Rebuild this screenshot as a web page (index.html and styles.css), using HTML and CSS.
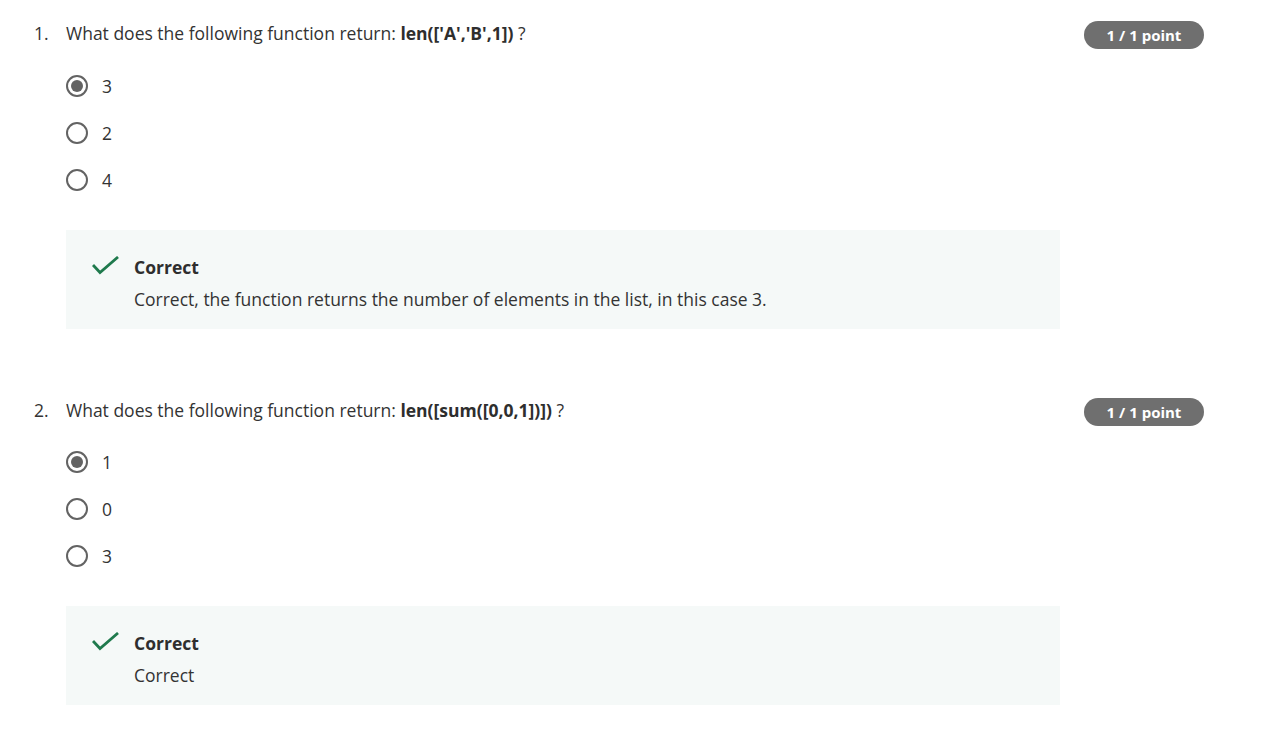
FILE: index.html
```html
<!DOCTYPE html>
<html>
<head>
<meta charset="utf-8">
<link rel="stylesheet" href="styles.css">
</head>
<body>
<main class="quiz">
  <section class="question q1">
    <div class="q-head">
      <span class="q-num">1.</span>
      <span class="q-text">What does the following function return: <b>len(['A','B',1])</b> ?</span>
      <span class="badge">1 / 1 point</span>
    </div>
    <ul class="options">
      <li class="option"><span class="radio checked"></span><span>3</span></li>
      <li class="option"><span class="radio"></span><span>2</span></li>
      <li class="option"><span class="radio"></span><span>4</span></li>
    </ul>
    <div class="feedback">
      <svg class="check" width="28" height="20" viewBox="0 0 28 20"><path d="M1 9 L8 16.5 L26 1" fill="none" stroke="#1f7a4d" stroke-width="2.8"/></svg>
      <div class="fb-body">
        <div class="fb-title">Correct</div>
        <div class="fb-text">Correct, the function returns the number of elements in the list, in this case 3.</div>
      </div>
    </div>
  </section>
  <section class="question q2">
    <div class="q-head">
      <span class="q-num">2.</span>
      <span class="q-text">What does the following function return: <b>len([sum([0,0,1])])</b> ?</span>
      <span class="badge">1 / 1 point</span>
    </div>
    <ul class="options">
      <li class="option"><span class="radio checked"></span><span>1</span></li>
      <li class="option"><span class="radio"></span><span>0</span></li>
      <li class="option"><span class="radio"></span><span>3</span></li>
    </ul>
    <div class="feedback">
      <svg class="check" width="28" height="20" viewBox="0 0 28 20"><path d="M1 9 L8 16.5 L26 1" fill="none" stroke="#1f7a4d" stroke-width="2.8"/></svg>
      <div class="fb-body">
        <div class="fb-title">Correct</div>
        <div class="fb-text">Correct</div>
      </div>
    </div>
  </section>
</main>
</body>
</html>
```
FILE: styles.css
```css
html, body {
  margin: 0;
  padding: 0;
  background: #ffffff;
}
body {
  font-family: "Open Sans", "Noto Sans", sans-serif;
  font-size: 17.5px;
  line-height: 24px;
  color: #333333;
}
.quiz {
  padding: 21px 0 0 34px;
  width: 1170px;
}
.question.q2 {
  margin-top: 69px;
}
.q-head {
  display: flex;
  align-items: flex-start;
  height: 28px;
}
.q-num {
  width: 32px;
  flex: none;
}
.q-text {
  flex: 1;
}
.q-text b {
  font-weight: 700;
  color: #2e2e2e;
}
.badge {
  flex: none;
  width: 120px;
  height: 28px;
  line-height: 28px;
  border-radius: 14px;
  background: #6f6f6f;
  color: #ffffff;
  font-size: 15px;
  font-weight: 700;
  text-align: center;
}
.options {
  list-style: none;
  margin: 25px 0 0 32px;
  padding: 0;
  display: flex;
  flex-direction: column;
  gap: 23px;
}
.q2 .options {
  margin-top: 24px;
}
.option {
  display: flex;
  align-items: center;
  height: 24px;
  gap: 14px;
}
.radio {
  width: 22px;
  height: 22px;
  box-sizing: border-box;
  border: 2px solid #636363;
  border-radius: 50%;
  display: flex;
  align-items: center;
  justify-content: center;
}
.radio.checked::after {
  content: "";
  width: 12px;
  height: 12px;
  border-radius: 50%;
  background: #636363;
}
.feedback {
  margin: 38px 0 0 32px;
  width: 994px;
  height: 99px;
  box-sizing: border-box;
  background: #f5f9f8;
  padding: 25px 0 0 26px;
  display: flex;
  align-items: flex-start;
}
.check {
  flex: none;
  margin-top: 1px;
  margin-right: 14px;
}
.fb-title {
  font-weight: 700;
  color: #2e2e2e;
}
.fb-text {
  margin-top: 8px;
}
```
